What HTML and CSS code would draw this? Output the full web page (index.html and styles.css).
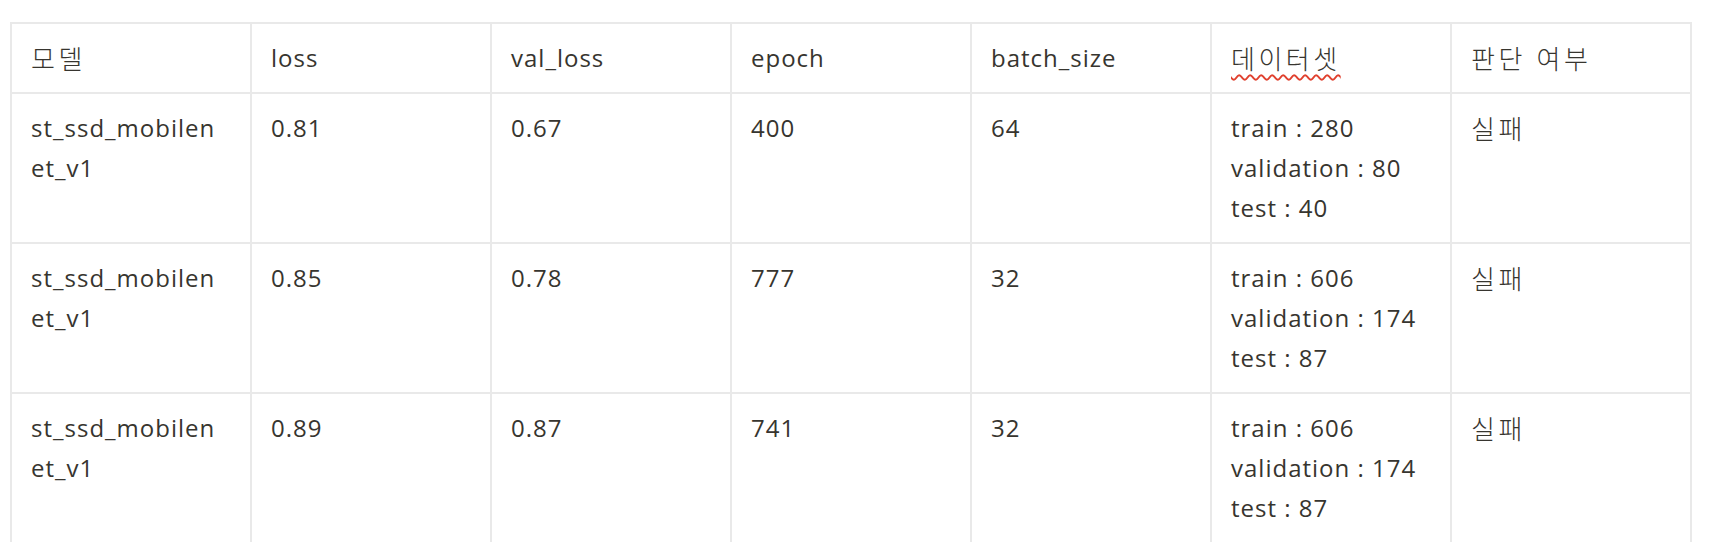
FILE: index.html
```html
<!DOCTYPE html>
<html lang="ko">
<head>
<meta charset="utf-8">
<link rel="stylesheet" href="styles.css">
</head>
<body>
<div class="page">
  <table class="results">
    <colgroup>
      <col class="c"><col class="c"><col class="c"><col class="c"><col class="c"><col class="c"><col class="c">
    </colgroup>
    <thead>
      <tr>
        <td><span class="ko">모델</span></td>
        <td>loss</td>
        <td>val_loss</td>
        <td>epoch</td>
        <td>batch_size</td>
        <td><span class="ko spell">데이터셋</span></td>
        <td><span class="ko">판단 여부</span></td>
      </tr>
    </thead>
    <tbody>
      <tr>
        <td>st_ssd_mobilenet_v1</td>
        <td>0.81</td>
        <td>0.67</td>
        <td>400</td>
        <td>64</td>
        <td>train : 280<br>validation : 80<br>test : 40</td>
        <td><span class="ko">실패</span></td>
      </tr>
      <tr>
        <td>st_ssd_mobilenet_v1</td>
        <td>0.85</td>
        <td>0.78</td>
        <td>777</td>
        <td>32</td>
        <td>train : 606<br>validation : 174<br>test : 87</td>
        <td><span class="ko">실패</span></td>
      </tr>
      <tr>
        <td>st_ssd_mobilenet_v1</td>
        <td>0.89</td>
        <td>0.87</td>
        <td>741</td>
        <td>32</td>
        <td>train : 606<br>validation : 174<br>test : 87</td>
        <td><span class="ko">실패</span></td>
      </tr>
    </tbody>
  </table>
</div>
</body>
</html>
```
FILE: styles.css
```css
html, body {
  margin: 0;
  padding: 0;
  background: #ffffff;
}
.page {
  padding: 22px 0 0 10px;
}
.results {
  border-collapse: collapse;
  table-layout: fixed;
  width: 1682px;
  font-family: "Open Sans", "Noto Sans CJK KR", sans-serif;
  font-size: 24px;
  letter-spacing: 1px;
  line-height: 40px;
  color: #37352f;
}
.results .c {
  width: 240px;
}
.results td {
  border: 2px solid #e9e9e9;
  padding: 14px 21px 14px 19px;
  vertical-align: top;
  overflow-wrap: anywhere;
  word-break: break-all;
}
.ko {
  display: inline-block;
  vertical-align: top;
  font-family: "Noto Sans CJK KR", "Open Sans", sans-serif;
  font-size: 26px;
  font-weight: 300;
  line-height: 40px;
  letter-spacing: 3.5px;
}
.spell {
  text-decoration: underline wavy #e0402e;
  text-decoration-thickness: 2px;
  text-underline-offset: 5px;
}
```
